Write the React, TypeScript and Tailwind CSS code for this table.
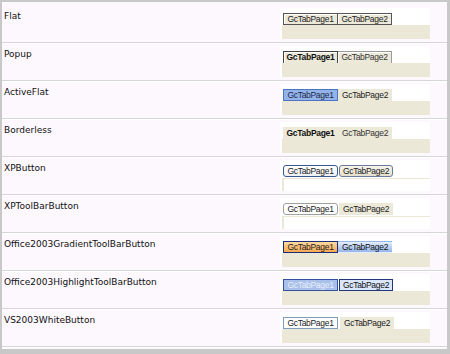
import React from "react";

const rows: { label: string; t1: string; t2: string; panel: "beige" | "xp" }[] = [
  {
    label: "Flat",
    t1: "bg-[#ece9d8] border border-[#555] shadow-[inset_1px_1px_0_#fff] text-[#222]",
    t2: "bg-[#ece9d8] border border-l-0 border-[#555] shadow-[inset_1px_1px_0_#fff] text-[#222]",
    panel: "beige",
  },
  {
    label: "Popup",
    t1: "bg-[#ece9d8] border border-b-0 border-[#444] shadow-[inset_1px_1px_0_#fff] text-[#111] font-bold",
    t2: "bg-[#ece9d8] border border-l-0 border-b-0 border-[#9a9a9a] shadow-[inset_1px_1px_0_#fff] text-[#333]",
    panel: "beige",
  },
  {
    label: "ActiveFlat",
    t1: "bg-[#94b3e9] border border-[#4d74c4] text-[#1a2a4a]",
    t2: "bg-[#ece9d8] border border-transparent text-[#222]",
    panel: "beige",
  },
  {
    label: "Borderless",
    t1: "bg-[#ece9d8] border border-transparent text-[#111] font-bold",
    t2: "bg-[#ece9d8] border border-transparent text-[#333]",
    panel: "beige",
  },
  {
    label: "XPButton",
    t1: "bg-gradient-to-b from-[#ffffff] to-[#eef0f4] border border-[#3a5890] rounded-[3px] text-[#222]",
    t2: "bg-gradient-to-b from-[#f6f4ec] to-[#e4e0cc] border border-[#6a7a98] rounded-[3px] text-[#222] ml-[1px]",
    panel: "xp",
  },
  {
    label: "XPToolBarButton",
    t1: "bg-white border border-[#a0a0a0] rounded-[3px] text-[#222]",
    t2: "bg-[#ece9d8] border border-transparent text-[#222] ml-[1px]",
    panel: "xp",
  },
  {
    label: "Office2003GradientToolBarButton",
    t1: "bg-gradient-to-b from-[#ffd9a0] to-[#f8a84e] border border-[#1c2c78] text-[#222]",
    t2: "bg-gradient-to-b from-[#e6effd] to-[#93b4ea] border border-transparent text-[#111]",
    panel: "beige",
  },
  {
    label: "Office2003HighlightToolBarButton",
    t1: "bg-[#a9c0ea] border border-[#36509c] text-[#e8eefa]",
    t2: "bg-[#dae6fb] border border-[#22387c] text-[#111] ml-[1px]",
    panel: "beige",
  },
  {
    label: "VS2003WhiteButton",
    t1: "bg-white border border-[#7f9db9] text-[#222]",
    t2: "bg-[#ece9d8] border border-transparent text-[#222] ml-[2px]",
    panel: "beige",
  },
];

export default function App() {
  return (
    <div className="w-[450px] h-[354px] bg-[#c8c8c8] pt-[2px] pl-[2px] pr-[3px] pb-[5px]">
      <div className="w-full h-full bg-[#fdf8fd] pt-[3px] flex flex-col">
        {rows.map((r) => (
          <div
            key={r.label}
            className="h-[38px] shrink-0 flex border-b border-[#d6d6d6] shadow-[0_1px_0_#ffffff]"
          >
            <div
              className="w-[278px] pl-[2px] pt-[5px] text-[9px] leading-[12px] text-[#111]"
              style={{ fontFamily: '"DejaVu Sans", Verdana, sans-serif' }}
            >
              {r.label}
            </div>
            <div className="pt-[3px]">
              <div className="w-[150px] h-[31px] bg-white flex flex-col">
                <div
                  className="flex mt-[5px] pl-[3px] h-[12px]"
                  style={{ fontFamily: '"Liberation Sans", Arial, sans-serif' }}
                >
                  <div
                    className={`w-[55px] h-[12px] flex items-center justify-center text-[8.5px] leading-none tracking-[-0.3px] ${r.t1}`}
                  >
                    GcTabPage1
                  </div>
                  <div
                    className={`w-[54px] h-[12px] flex items-center justify-center text-[8.5px] leading-none tracking-[-0.3px] ${r.t2}`}
                  >
                    GcTabPage2
                  </div>
                </div>
                {r.panel === "beige" ? (
                  <div className="flex-1 ml-[2px] bg-[#ebe8d8]" />
                ) : (
                  <div className="flex-1 ml-[2px] bg-white border-l-2 border-t border-[#ebe8d8] mt-[1px]" />
                )}
              </div>
            </div>
          </div>
        ))}
      </div>
    </div>
  );
}
